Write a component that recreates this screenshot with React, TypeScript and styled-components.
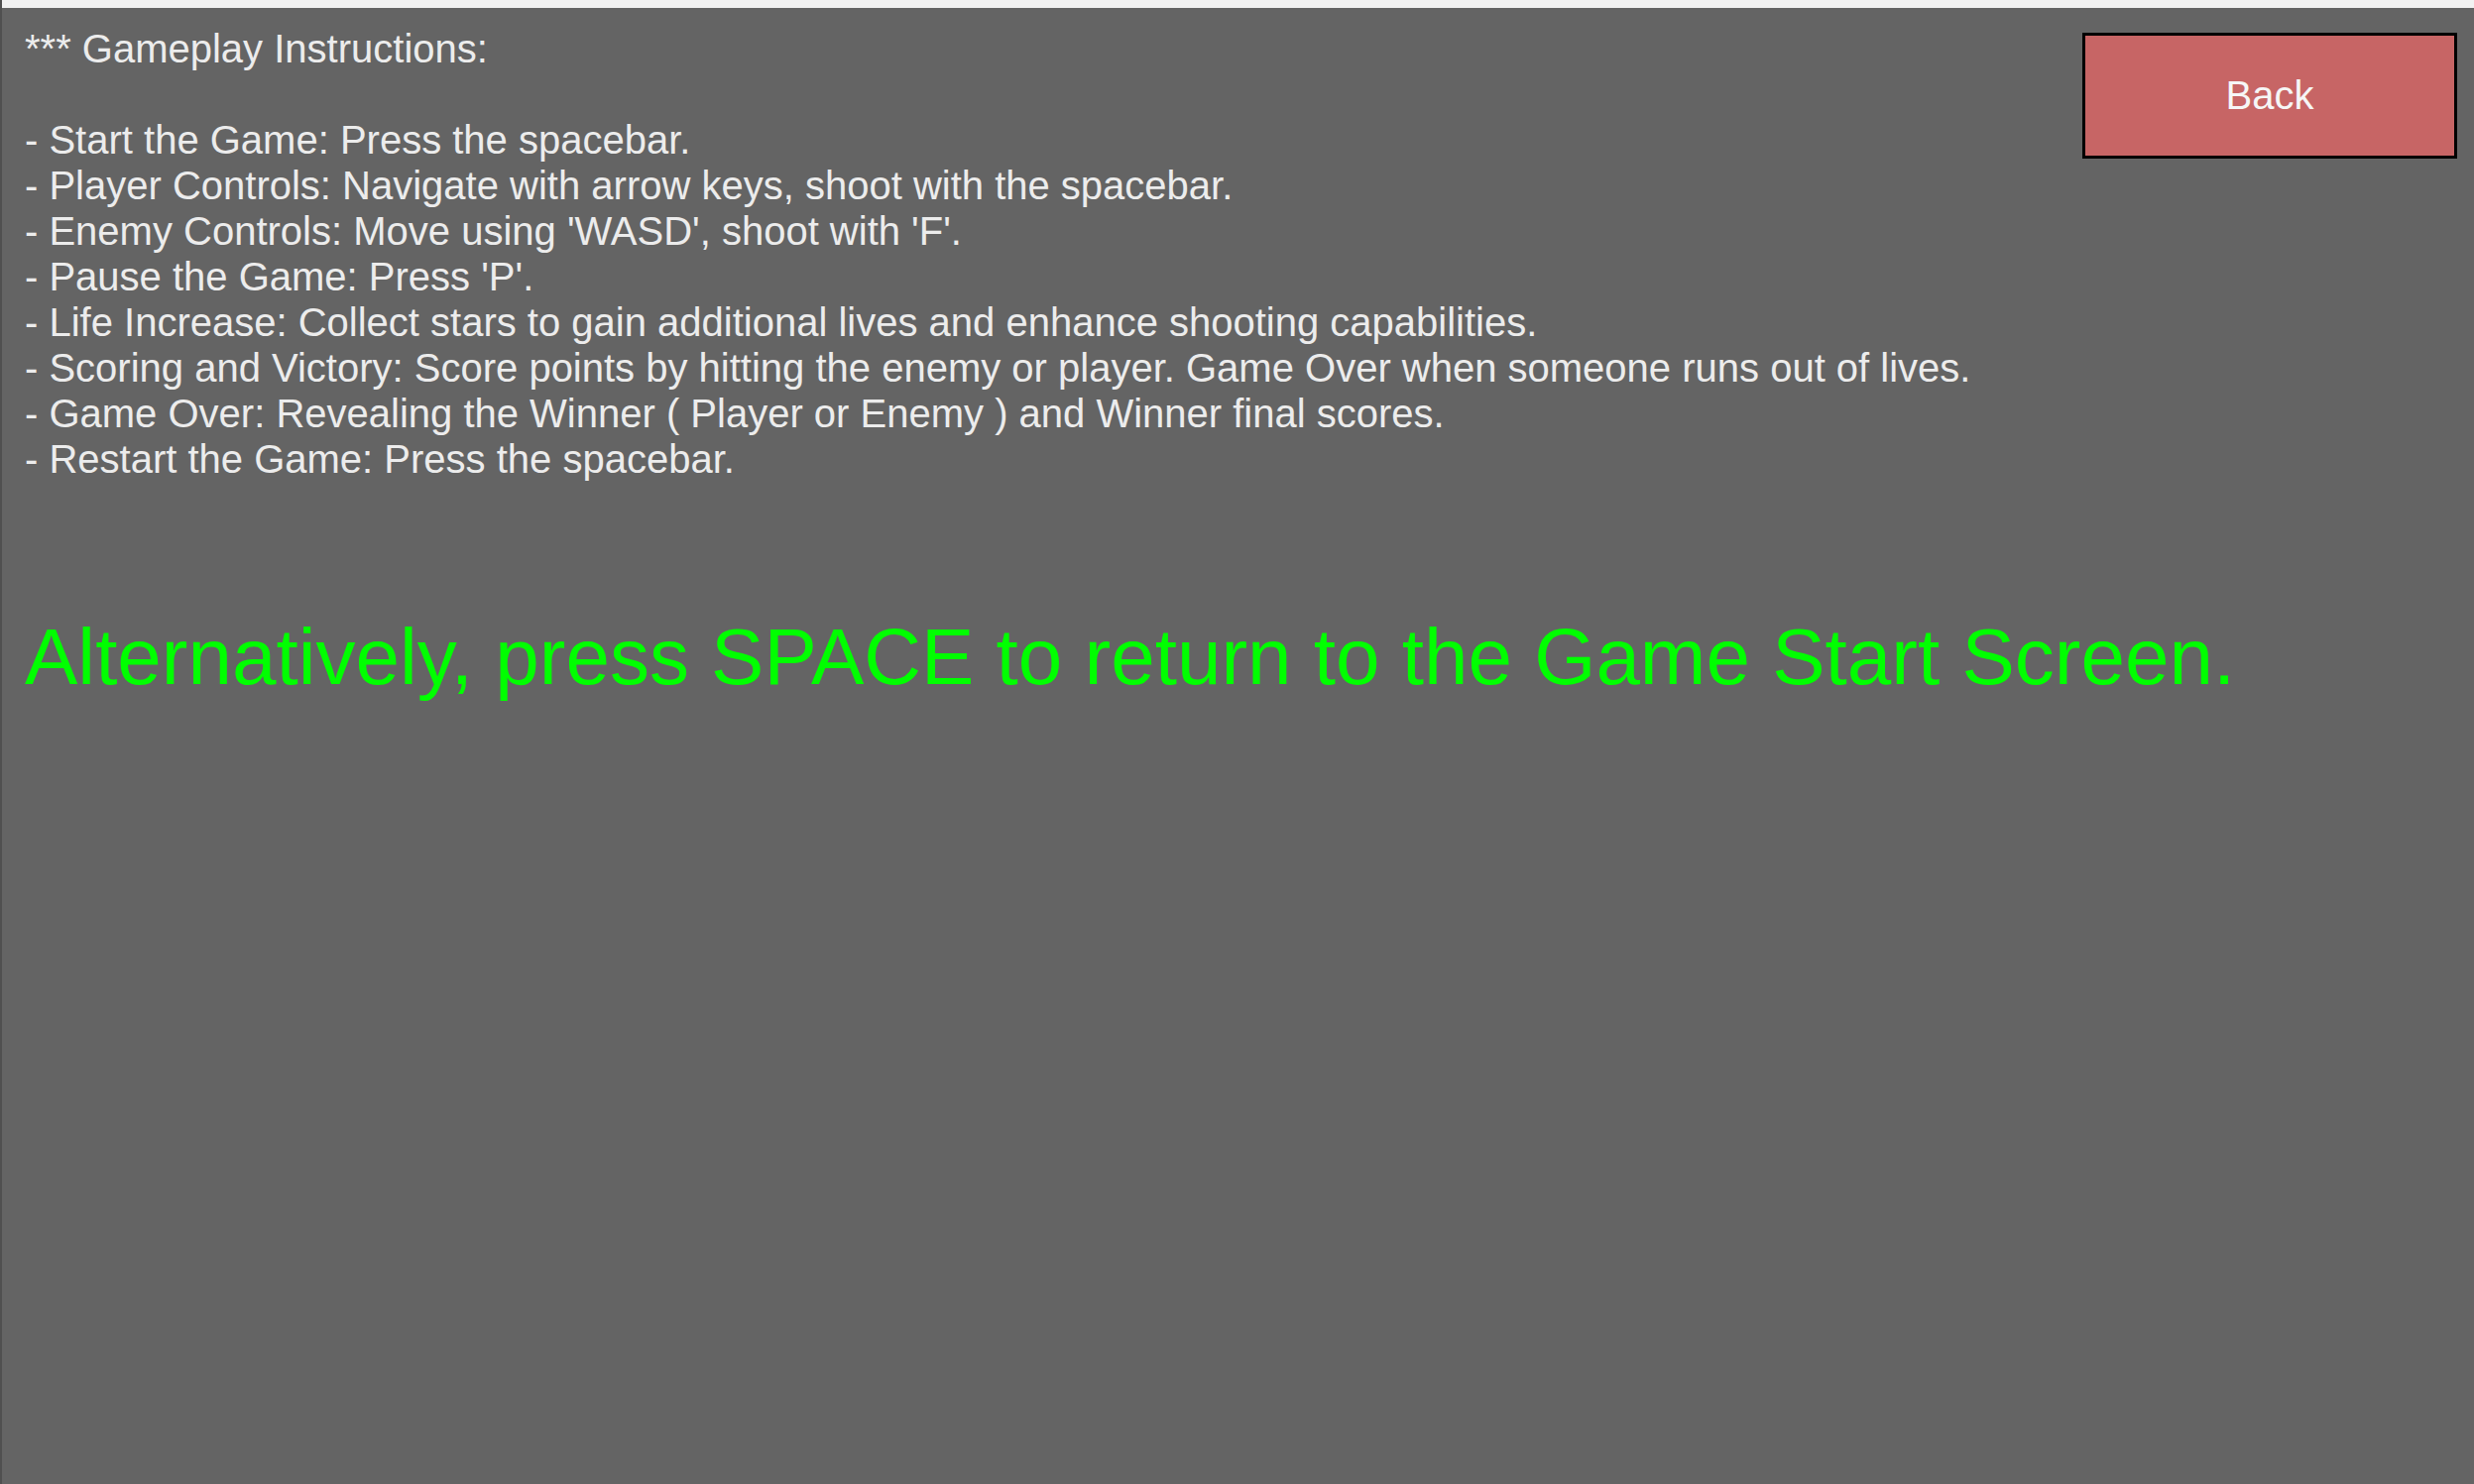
import React from "react";
import styled, { createGlobalStyle } from "styled-components";

const GlobalStyle = createGlobalStyle`
  html, body {
    margin: 0;
    padding: 0;
    background: #646464;
  }
  body {
    font-family: "Liberation Sans", Arial, sans-serif;
  }
`;

const Screen = styled.div`
  min-height: 100vh;
  display: flex;
  flex-direction: column;
  background: #646464;
  border-left: 2px solid #505050;
  box-sizing: border-box;
`;

const TopBar = styled.div`
  height: 8px;
  background: #f2f2f2;
  flex: none;
`;

const Body = styled.main`
  display: flex;
  flex-direction: column;
  padding: 18px 17px 0 23px;
`;

const HeaderRow = styled.div`
  display: flex;
  justify-content: space-between;
  align-items: flex-start;
`;

const Instructions = styled.div`
  display: flex;
  flex-direction: column;
  color: #ececec;
  font-size: 40px;
  line-height: 46px;
  white-space: pre;
`;

const Line = styled.div<{ $gapBefore?: boolean }>`
  margin-top: ${(p) => (p.$gapBefore ? "46px" : "0")};
`;

const BackButton = styled.button`
  width: 378px;
  height: 127px;
  margin-top: 7px;
  box-sizing: border-box;
  background: #c76565;
  border: 3px solid #000;
  color: #f6f6f6;
  font-family: "Liberation Sans", Arial, sans-serif;
  font-size: 40px;
  display: flex;
  align-items: center;
  justify-content: center;
  padding: 0;
  cursor: pointer;
`;

const Hint = styled.div`
  margin-top: 131px;
  color: #00ff00;
  font-size: 80px;
  line-height: 92px;
  white-space: nowrap;
`;

const lines = [
  "- Start the Game: Press the spacebar.",
  "- Player Controls: Navigate with arrow keys, shoot with the spacebar.",
  "- Enemy Controls: Move using 'WASD', shoot with 'F'.",
  "- Pause the Game: Press 'P'.",
  "- Life Increase: Collect stars to gain additional lives and enhance shooting capabilities.",
  "- Scoring and Victory: Score points by hitting the enemy or player. Game Over when someone runs out of lives.",
  "- Game Over: Revealing the Winner ( Player or Enemy ) and Winner final scores.",
  "- Restart the Game: Press the spacebar.",
];

export default function App() {
  return (
    <>
      <GlobalStyle />
      <Screen>
        <TopBar />
        <Body>
          <HeaderRow>
            <Instructions>
              <Line>*** Gameplay Instructions:</Line>
              {lines.map((l, i) => (
                <Line key={i} $gapBefore={i === 0}>
                  {l}
                </Line>
              ))}
            </Instructions>
            <BackButton>Back</BackButton>
          </HeaderRow>
          <Hint>Alternatively, press SPACE to return to the Game Start Screen.</Hint>
        </Body>
      </Screen>
    </>
  );
}
